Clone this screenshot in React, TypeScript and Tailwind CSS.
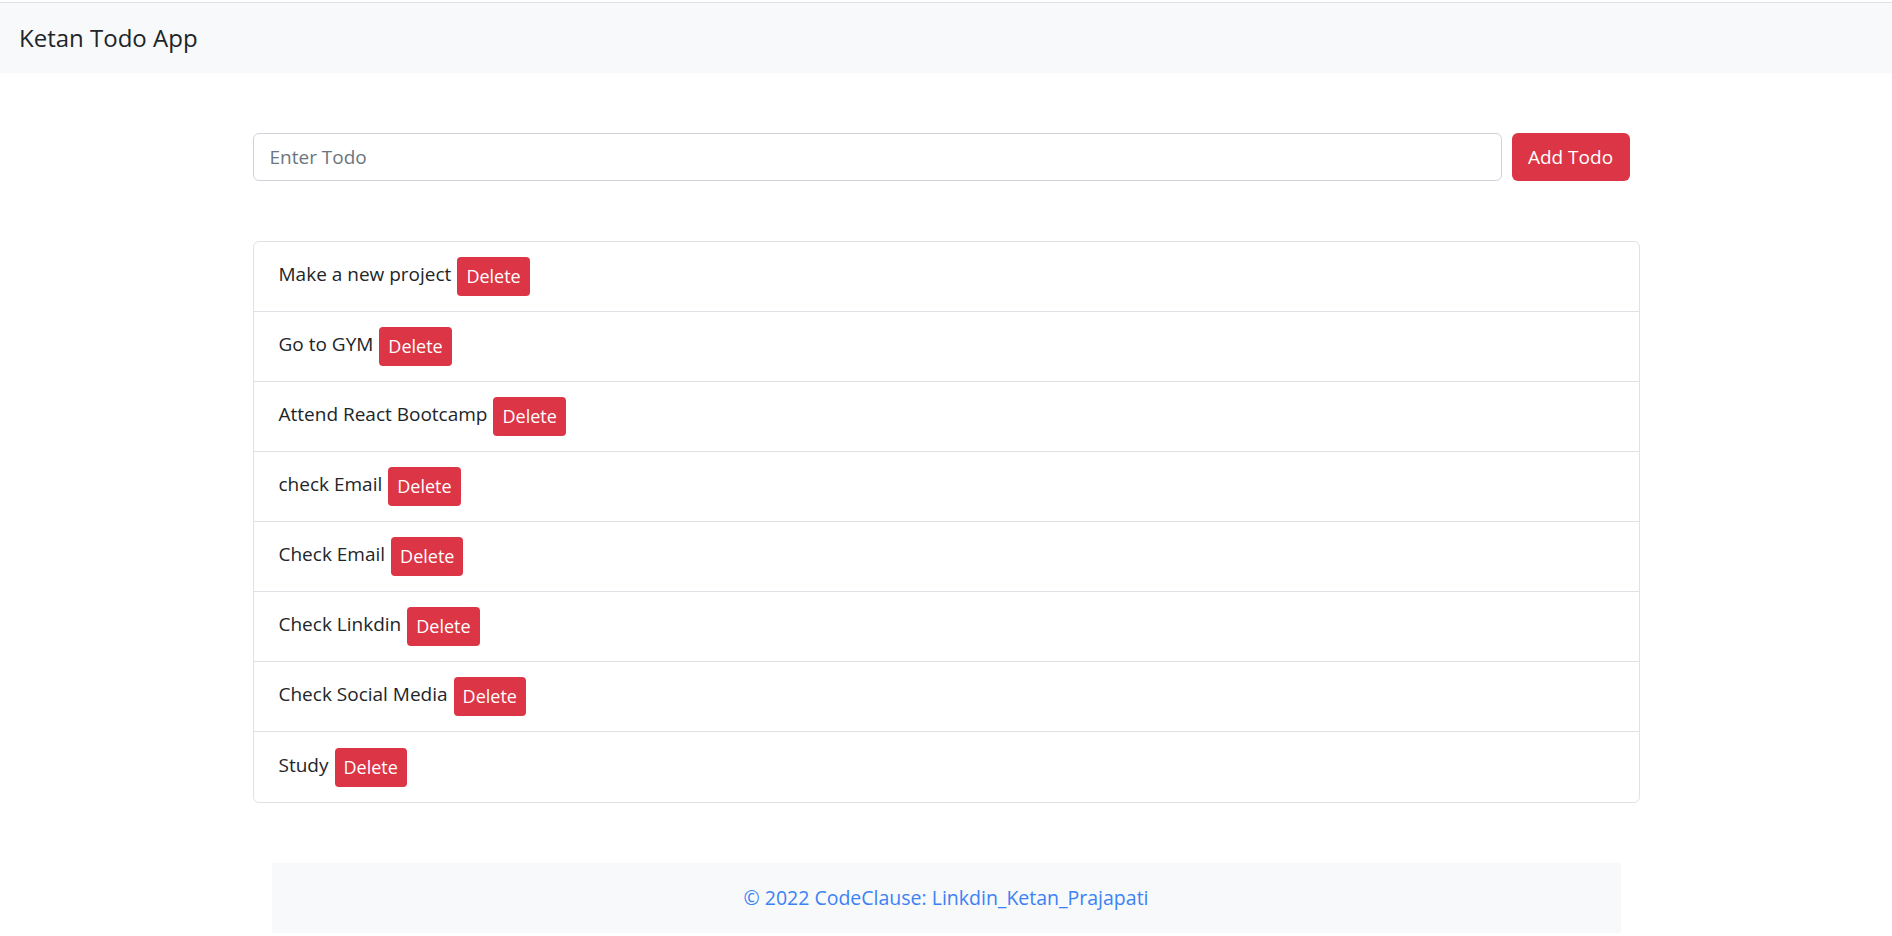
import React, { useState } from 'react';

const initialTodos = [
  'Make a new project',
  'Go to GYM',
  'Attend React Bootcamp',
  'check Email',
  'Check Email',
  'Check Linkdin',
  'Check Social Media',
  'Study',
];

const App: React.FC = () => {
  const [todos, setTodos] = useState<string[]>(initialTodos);
  const [text, setText] = useState('');

  const addTodo = () => {
    if (text.trim()) {
      setTodos([...todos, text.trim()]);
      setText('');
    }
  };

  const deleteTodo = (index: number) => {
    setTodos(todos.filter((_, i) => i !== index));
  };

  return (
    <div className="min-h-screen bg-white pt-[2px] text-[#212529] font-['Open_Sans',sans-serif]">
      {/* Navbar */}
      <nav className="border-t border-[#dee2e6] bg-[#f8f9fa] h-[71px] flex items-center pl-[19px]">
        <span className="text-[24px] leading-none font-medium">Ketan Todo App</span>
      </nav>

      <div className="w-[1387px] mx-auto">
        {/* Add todo form */}
        <div className="flex gap-[10px] mt-[60px]">
          <input
            type="text"
            value={text}
            onChange={(e) => setText(e.target.value)}
            placeholder="Enter Todo"
            className="w-[1249px] h-[48px] border border-[#ced4da] rounded-[6px] px-[16px] text-[19px] placeholder-[#6c757d] outline-none"
          />
          <button
            onClick={addTodo}
            className="w-[118px] h-[48px] bg-[#dc3545] text-white rounded-[6px] text-[19px]"
          >
            Add Todo
          </button>
        </div>

        {/* Todo list */}
        <ul className="mt-[60px] border border-[#dee2e6] rounded-[6px]">
          {todos.map((todo, i) => (
            <li
              key={i}
              className="h-[70px] flex items-center pl-[25px] border-b border-[#dee2e6] last:border-b-0 text-[19px]"
            >
              <span className="mb-[4px]">{todo}</span>
              <button
                onClick={() => deleteTodo(i)}
                className="ml-[6px] h-[39px] px-[9px] bg-[#dc3545] text-white rounded-[4px] text-[18px]"
              >
                Delete
              </button>
            </li>
          ))}
        </ul>
      </div>

      {/* Footer */}
      <footer className="w-[1349px] mx-auto mt-[60px] h-[70px] bg-[#f8f9fa] flex items-center justify-center">
        <span className="text-[19.5px] text-[#3b82f6]">© 2022 CodeClause: Linkdin_Ketan_Prajapati</span>
      </footer>
    </div>
  );
};

export default App;
